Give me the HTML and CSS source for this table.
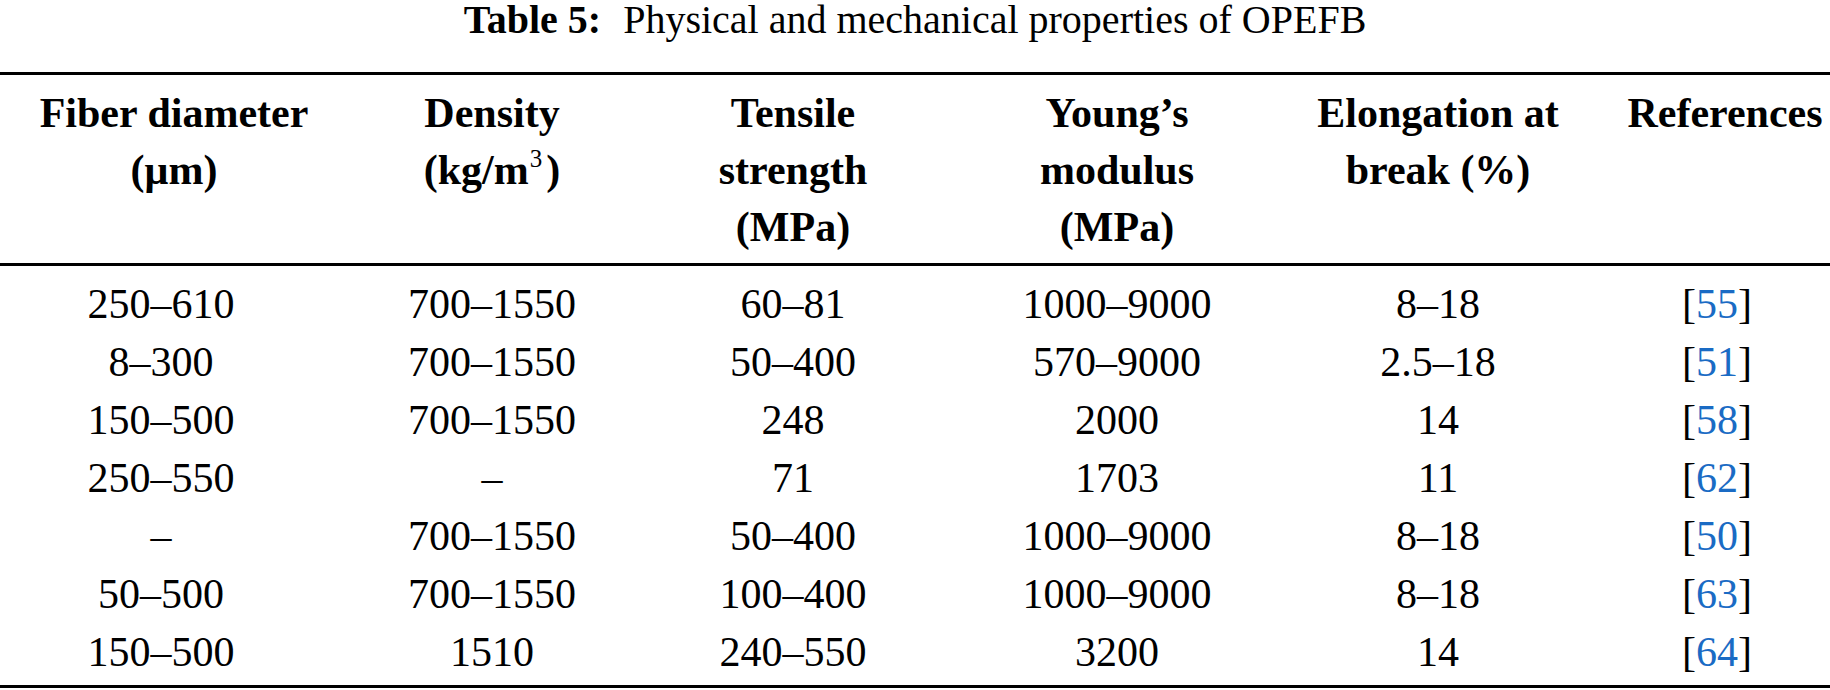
FILE: index.html
```html
<!DOCTYPE html>
<html lang="en">
<head>
<meta charset="utf-8">
<title>Table 5</title>
<link rel="stylesheet" href="styles.css">
</head>
<body>
<div class="wrap">
  <div class="caption"><span class="cap-label">Table 5:</span><span class="cap-text">Physical and mechanical properties of OPEFB</span></div>
  <table class="data">
    <colgroup>
      <col class="c1"><col class="c2"><col class="c3"><col class="c4"><col class="c5"><col class="c6">
    </colgroup>
    <thead>
      <tr>
        <th>Fiber diameter<br>(μm)</th>
        <th>Density<br>(kg/m<span class="sup">3</span>)</th>
        <th>Tensile<br>strength<br>(MPa)</th>
        <th>Young’s<br>modulus<br>(MPa)</th>
        <th>Elongation at<br>break (%)</th>
        <th>References</th>
      </tr>
    </thead>
    <tbody>
      <tr><td>250–610</td><td>700–1550</td><td>60–81</td><td>1000–9000</td><td>8–18</td><td>[<span class="ref">55</span>]</td></tr>
      <tr><td>8–300</td><td>700–1550</td><td>50–400</td><td>570–9000</td><td>2.5–18</td><td>[<span class="ref">51</span>]</td></tr>
      <tr><td>150–500</td><td>700–1550</td><td>248</td><td>2000</td><td>14</td><td>[<span class="ref">58</span>]</td></tr>
      <tr><td>250–550</td><td>–</td><td>71</td><td>1703</td><td>11</td><td>[<span class="ref">62</span>]</td></tr>
      <tr><td>–</td><td>700–1550</td><td>50–400</td><td>1000–9000</td><td>8–18</td><td>[<span class="ref">50</span>]</td></tr>
      <tr><td>50–500</td><td>700–1550</td><td>100–400</td><td>1000–9000</td><td>8–18</td><td>[<span class="ref">63</span>]</td></tr>
      <tr><td>150–500</td><td>1510</td><td>240–550</td><td>3200</td><td>14</td><td>[<span class="ref">64</span>]</td></tr>
    </tbody>
  </table>
</div>
</body>
</html>
```
FILE: styles.css
```css
html, body {
  margin: 0;
  padding: 0;
  background: #ffffff;
}

body {
  font-family: "Liberation Serif", "Times New Roman", serif;
  color: #000000;
}

.wrap {
  width: 1830px;
}

.caption {
  font-size: 40px;
  line-height: 40px;
  text-align: center;
  margin-bottom: 32px;
  white-space: nowrap;
}

.cap-label {
  font-weight: bold;
  margin-right: 22px;
}

.data {
  width: 1830px;
  border-collapse: collapse;
  table-layout: fixed;
  border-top: 3px solid #000;
  border-bottom: 3px solid #000;
  font-size: 42px;
}

.c1 { width: 336px; }
.c2 { width: 312px; }
.c3 { width: 290px; }
.c4 { width: 358px; }
.c5 { width: 284px; }
.c6 { width: 250px; }

.data thead tr {
  border-bottom: 3px solid #000;
}

.data th {
  font-weight: bold;
  line-height: 57px;
  padding: 10px 0 7px 0;
  vertical-align: top;
  text-align: center;
  white-space: nowrap;
}

.data th:first-child {
  padding-left: 12px;
}

.data th:last-child {
  padding-left: 40px;
}

.data td {
  line-height: 58px;
  padding: 0;
  text-align: center;
  white-space: nowrap;
}

.data tbody tr:first-child td {
  padding-top: 9px;
}

.data tbody tr:last-child td {
  padding-bottom: 4px;
}

.data td:first-child {
  padding-right: 14px;
}

.data td:last-child {
  padding-left: 24px;
}

.sup {
  font-weight: normal;
  font-size: 25px;
  line-height: 0;
  vertical-align: 17px;
  margin: 0 4px 0 1px;
}

.ref {
  color: #1a6bc4;
}
```
